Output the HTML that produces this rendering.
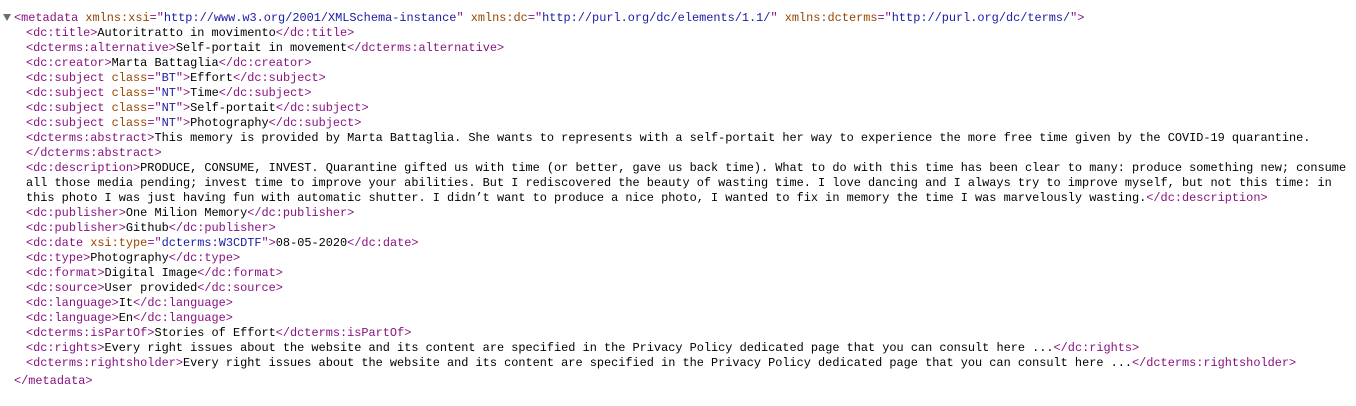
<!DOCTYPE html>
<html><head><meta charset="utf-8"><style>
body{margin:0;background:#fff;font-family:"Liberation Mono",monospace;font-size:11.9px;color:#000;}
.l{position:absolute;white-space:pre;line-height:15px;height:15px;}
.t{color:#881280}.a{color:#994500}.v{color:#1a1aa6}
.tri{position:absolute;left:3px;top:14px;width:0;height:0;border-left:4px solid transparent;border-right:4px solid transparent;border-top:7px solid #6e6e6e;}
</style></head><body>
<div class="tri"></div>
<div class="l" style="left:14px;top:11px"><span class="t">&lt;metadata</span> <span class="a">xmlns:xsi</span><span class="t">="</span><span class="v">http://www.w3.org/2001/XMLSchema-instance</span><span class="t">"</span> <span class="a">xmlns:dc</span><span class="t">="</span><span class="v">http://purl.org/dc/elements/1.1/</span><span class="t">"</span> <span class="a">xmlns:dcterms</span><span class="t">="</span><span class="v">http://purl.org/dc/terms/</span><span class="t">"&gt;</span></div>
<div class="l" style="left:26px;top:26px"><span class="t">&lt;dc:title&gt;</span>Autoritratto in movimento<span class="t">&lt;/dc:title&gt;</span></div>
<div class="l" style="left:26px;top:41px"><span class="t">&lt;dcterms:alternative&gt;</span>Self-portait in movement<span class="t">&lt;/dcterms:alternative&gt;</span></div>
<div class="l" style="left:26px;top:56px"><span class="t">&lt;dc:creator&gt;</span>Marta Battaglia<span class="t">&lt;/dc:creator&gt;</span></div>
<div class="l" style="left:26px;top:71px"><span class="t">&lt;dc:subject</span> <span class="a">class</span><span class="t">="</span><span class="v">BT</span><span class="t">"&gt;</span>Effort<span class="t">&lt;/dc:subject&gt;</span></div>
<div class="l" style="left:26px;top:86px"><span class="t">&lt;dc:subject</span> <span class="a">class</span><span class="t">="</span><span class="v">NT</span><span class="t">"&gt;</span>Time<span class="t">&lt;/dc:subject&gt;</span></div>
<div class="l" style="left:26px;top:101px"><span class="t">&lt;dc:subject</span> <span class="a">class</span><span class="t">="</span><span class="v">NT</span><span class="t">"&gt;</span>Self-portait<span class="t">&lt;/dc:subject&gt;</span></div>
<div class="l" style="left:26px;top:116px"><span class="t">&lt;dc:subject</span> <span class="a">class</span><span class="t">="</span><span class="v">NT</span><span class="t">"&gt;</span>Photography<span class="t">&lt;/dc:subject&gt;</span></div>
<div class="l" style="left:26px;top:131px"><span class="t">&lt;dcterms:abstract&gt;</span>This memory is provided by Marta Battaglia. She wants to represents with a self-portait her way to experience the more free time given by the COVID-19 quarantine.</div>
<div class="l" style="left:26px;top:146px"><span class="t">&lt;/dcterms:abstract&gt;</span></div>
<div class="l" style="left:26px;top:161px"><span class="t">&lt;dc:description&gt;</span>PRODUCE, CONSUME, INVEST. Quarantine gifted us with time (or better, gave us back time). What to do with this time has been clear to many: produce something new; consume</div>
<div class="l" style="left:26px;top:176px">all those media pending; invest time to improve your abilities. But I rediscovered the beauty of wasting time. I love dancing and I always try to improve myself, but not this time: in</div>
<div class="l" style="left:26px;top:191px">this photo I was just having fun with automatic shutter. I didn’t want to produce a nice photo, I wanted to fix in memory the time I was marvelously wasting.<span class="t">&lt;/dc:description&gt;</span></div>
<div class="l" style="left:26px;top:206px"><span class="t">&lt;dc:publisher&gt;</span>One Milion Memory<span class="t">&lt;/dc:publisher&gt;</span></div>
<div class="l" style="left:26px;top:221px"><span class="t">&lt;dc:publisher&gt;</span>Github<span class="t">&lt;/dc:publisher&gt;</span></div>
<div class="l" style="left:26px;top:236px"><span class="t">&lt;dc:date</span> <span class="a">xsi:type</span><span class="t">="</span><span class="v">dcterms:W3CDTF</span><span class="t">"&gt;</span>08-05-2020<span class="t">&lt;/dc:date&gt;</span></div>
<div class="l" style="left:26px;top:251px"><span class="t">&lt;dc:type&gt;</span>Photography<span class="t">&lt;/dc:type&gt;</span></div>
<div class="l" style="left:26px;top:266px"><span class="t">&lt;dc:format&gt;</span>Digital Image<span class="t">&lt;/dc:format&gt;</span></div>
<div class="l" style="left:26px;top:281px"><span class="t">&lt;dc:source&gt;</span>User provided<span class="t">&lt;/dc:source&gt;</span></div>
<div class="l" style="left:26px;top:296px"><span class="t">&lt;dc:language&gt;</span>It<span class="t">&lt;/dc:language&gt;</span></div>
<div class="l" style="left:26px;top:311px"><span class="t">&lt;dc:language&gt;</span>En<span class="t">&lt;/dc:language&gt;</span></div>
<div class="l" style="left:26px;top:326px"><span class="t">&lt;dcterms:isPartOf&gt;</span>Stories of Effort<span class="t">&lt;/dcterms:isPartOf&gt;</span></div>
<div class="l" style="left:26px;top:341px"><span class="t">&lt;dc:rights&gt;</span>Every right issues about the website and its content are specified in the Privacy Policy dedicated page that you can consult here ...<span class="t">&lt;/dc:rights&gt;</span></div>
<div class="l" style="left:26px;top:356px"><span class="t">&lt;dcterms:rightsholder&gt;</span>Every right issues about the website and its content are specified in the Privacy Policy dedicated page that you can consult here ...<span class="t">&lt;/dcterms:rightsholder&gt;</span></div>
<div class="l" style="left:14px;top:374px"><span class="t">&lt;/metadata&gt;</span></div>
</body></html>
